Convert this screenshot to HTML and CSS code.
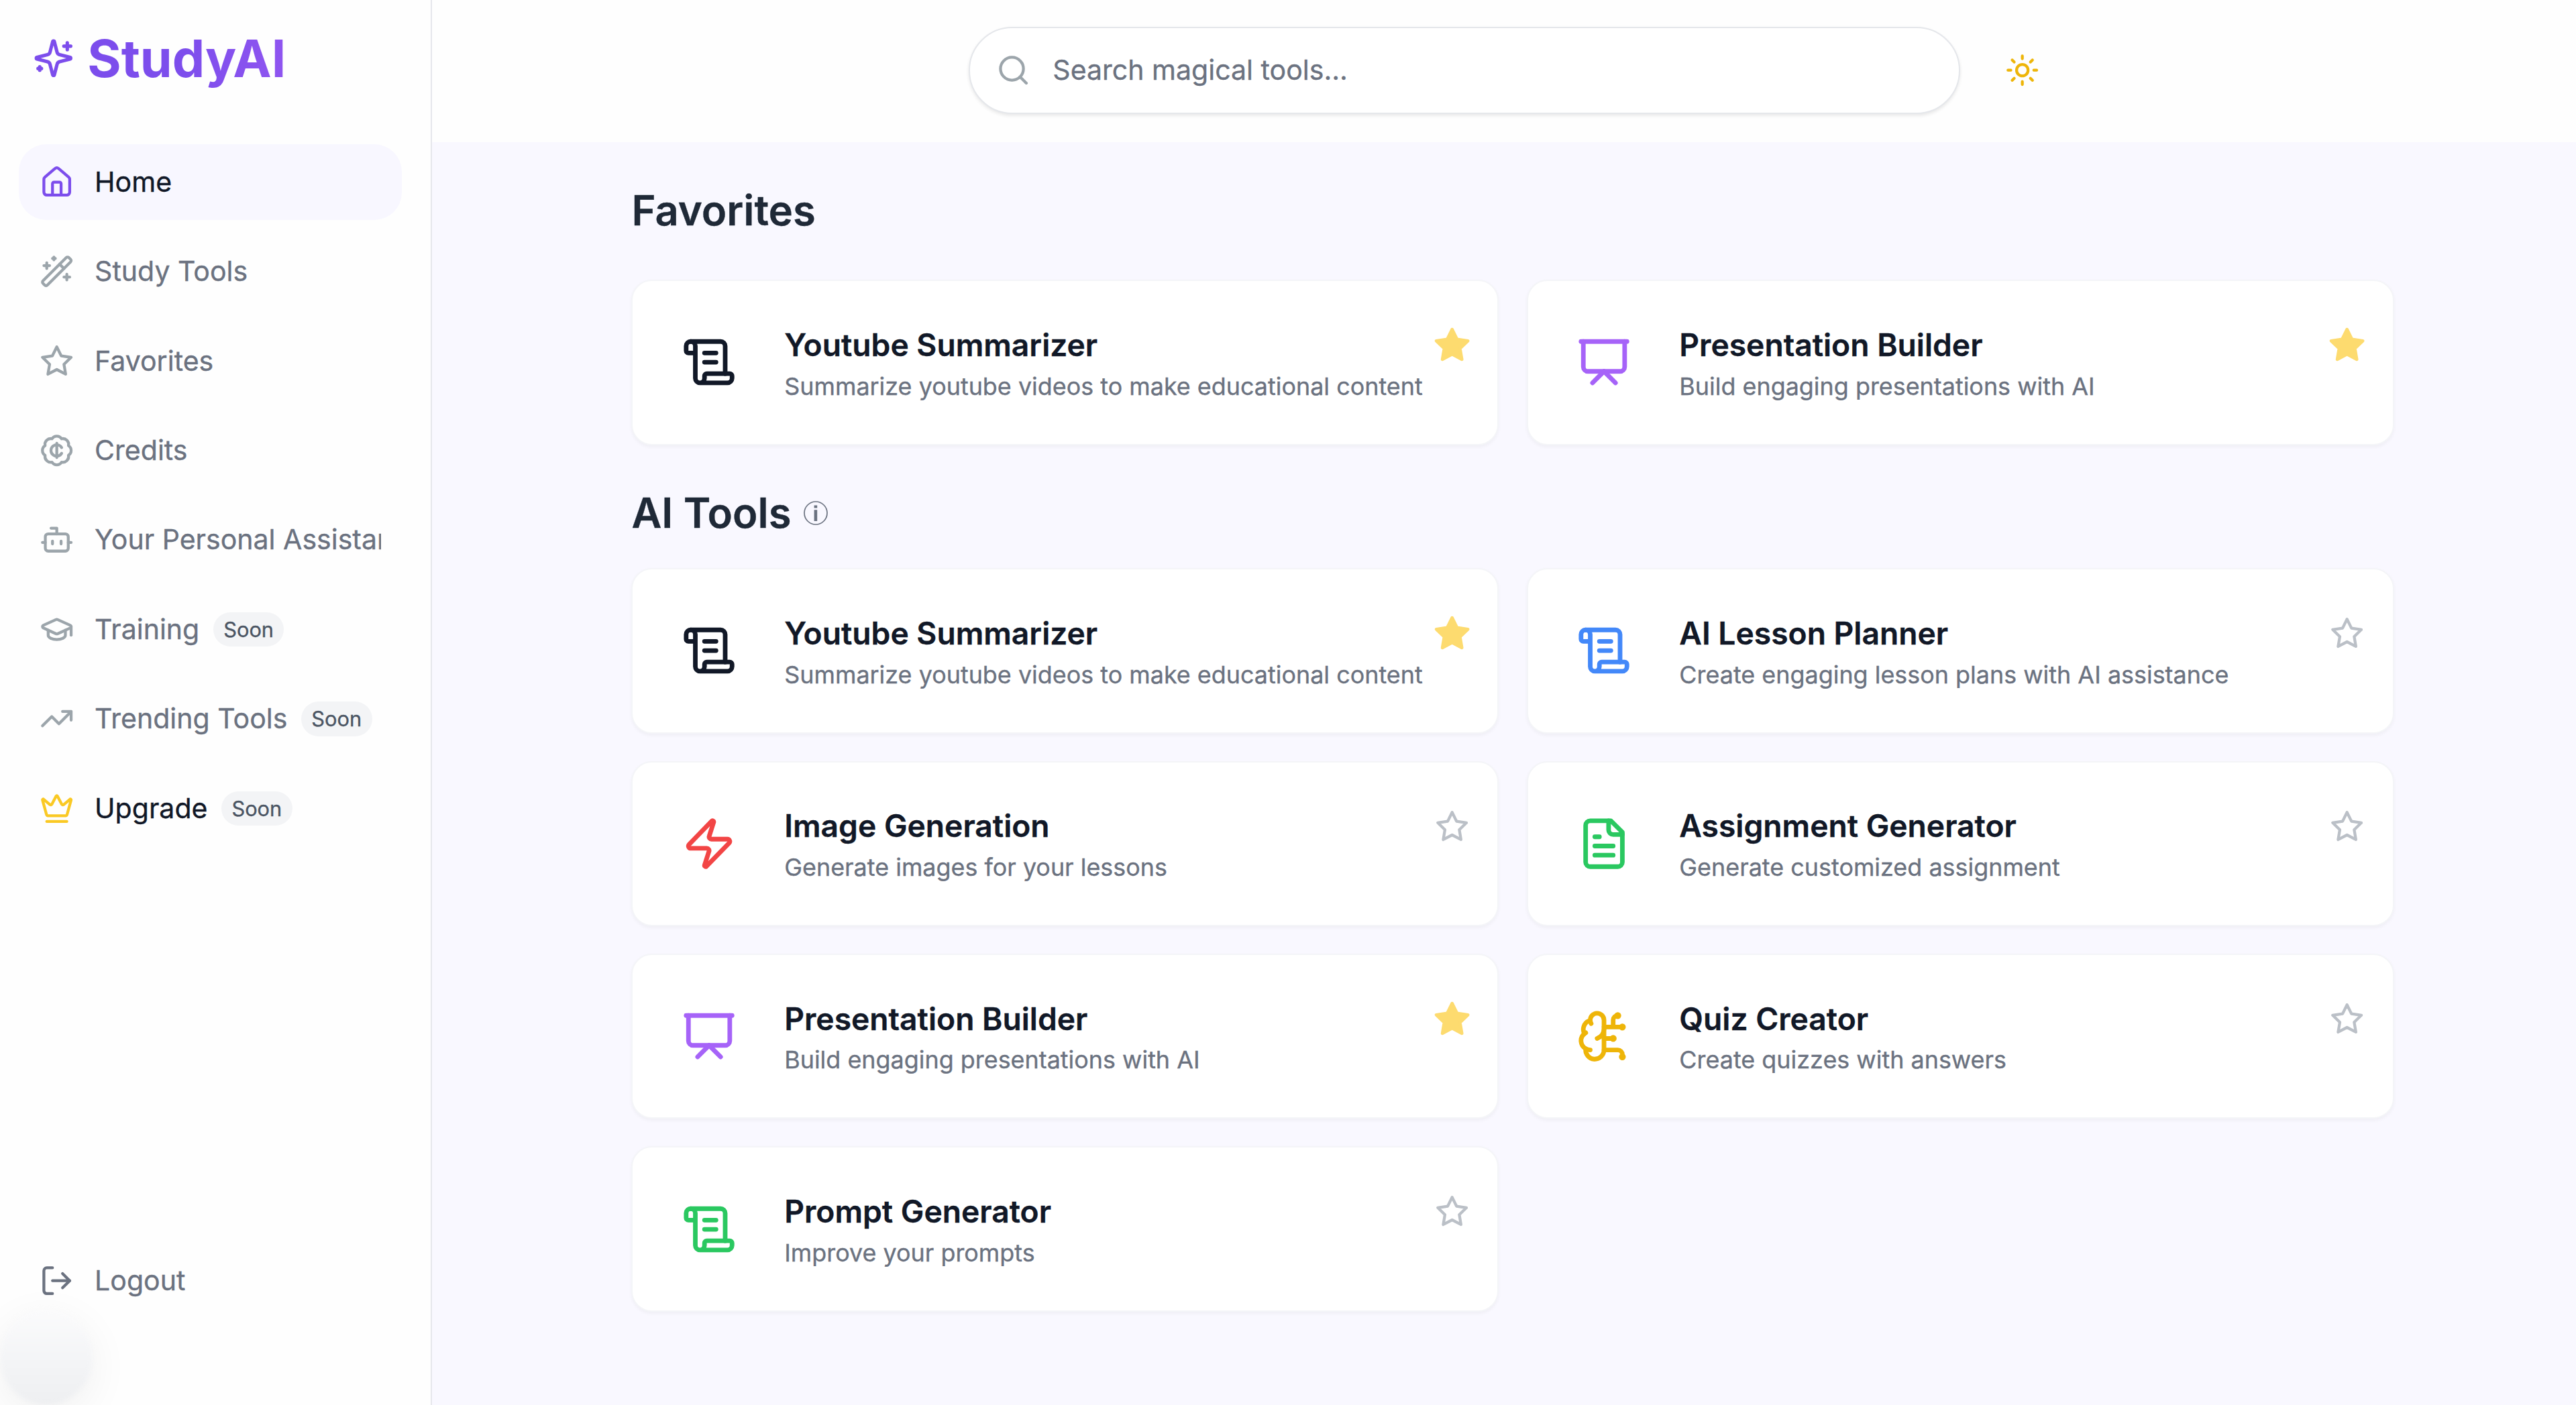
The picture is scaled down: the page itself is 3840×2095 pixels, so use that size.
FILE: index.html
```html
<!DOCTYPE html>
<html lang="en">
<head>
<meta charset="utf-8">
<title>StudyAI</title>
<link rel="stylesheet" href="styles.css">
</head>
<body>
<svg class="sprite" aria-hidden="true">
  <symbol id="sparkles" viewBox="0 0 24 24"><path d="M9.937 15.5A2 2 0 0 0 8.5 14.063l-6.135-1.582a.5.5 0 0 1 0-.962L8.5 9.936A2 2 0 0 0 9.937 8.5l1.582-6.135a.5.5 0 0 1 .963 0L14.063 8.5A2 2 0 0 0 15.5 9.937l6.135 1.581a.5.5 0 0 1 0 .964L15.5 14.063a2 2 0 0 0-1.437 1.437l-1.582 6.135a.5.5 0 0 1-.963 0z"/><path d="M20 3v4M22 5h-4M4 17v2M5 18H3"/></symbol>
  <symbol id="house" viewBox="0 0 24 24"><path d="M15 21v-8a1 1 0 0 0-1-1h-4a1 1 0 0 0-1 1v8"/><path d="M3 10a2 2 0 0 1 .709-1.528l7-5.999a2 2 0 0 1 2.582 0l7 5.999A2 2 0 0 1 21 10v9a2 2 0 0 1-2 2H5a2 2 0 0 1-2-2z"/></symbol>
  <symbol id="wand" viewBox="0 0 24 24"><path d="m21.64 3.64-1.28-1.28a1.21 1.21 0 0 0-1.72 0L2.36 18.64a1.21 1.21 0 0 0 0 1.72l1.28 1.28a1.2 1.2 0 0 0 1.72 0L21.64 5.36a1.2 1.2 0 0 0 0-1.72"/><path d="m14 7 3 3M5 6v4M19 14v4M10 2v2M7 8H3M21 16h-4M11 3H9"/></symbol>
  <symbol id="star" viewBox="0 0 24 24"><polygon points="12 2 15.09 8.26 22 9.27 17 14.14 18.18 21.02 12 17.77 5.82 21.02 7 14.14 2 9.27 8.91 8.26 12 2"/></symbol>
  <symbol id="cent" viewBox="0 0 24 24"><path d="M3.85 8.62a4 4 0 0 1 4.78-4.77 4 4 0 0 1 6.74 0 4 4 0 0 1 4.78 4.78 4 4 0 0 1 0 6.74 4 4 0 0 1-4.77 4.78 4 4 0 0 1-6.75 0 4 4 0 0 1-4.78-4.77 4 4 0 0 1 0-6.76Z"/><path d="M12 7v10M15.4 10a4 4 0 1 0 0 4"/></symbol>
  <symbol id="bot" viewBox="0 0 24 24"><path d="M12 8V4H8"/><rect width="16" height="12" x="4" y="8" rx="2"/><path d="M2 14h2M20 14h2M15 13v2M9 13v2"/></symbol>
  <symbol id="cap" viewBox="0 0 24 24"><path d="M21.42 10.922a1 1 0 0 0-.019-1.838L12.83 5.18a2 2 0 0 0-1.66 0L2.6 9.08a1 1 0 0 0 0 1.832l8.57 3.908a2 2 0 0 0 1.66 0z"/><path d="M22 10v6"/><path d="M6 12.5V16a6 3 0 0 0 12 0v-3.5"/></symbol>
  <symbol id="trend" viewBox="0 0 24 24"><polyline points="22 7 13.5 15.5 8.5 10.5 2 17"/><polyline points="16 7 22 7 22 13"/></symbol>
  <symbol id="crown" viewBox="0 0 24 24"><path d="M11.562 3.266a.5.5 0 0 1 .876 0L15.39 8.87a1 1 0 0 0 1.516.294L21.183 5.5a.5.5 0 0 1 .798.519l-2.834 10.246a1 1 0 0 1-.956.734H5.81a1 1 0 0 1-.957-.734L2.02 6.02a.5.5 0 0 1 .798-.519l4.276 3.664a1 1 0 0 0 1.516-.294z"/><path d="M5 21h14"/></symbol>
  <symbol id="logout" viewBox="0 0 24 24"><path d="M9 21H5a2 2 0 0 1-2-2V5a2 2 0 0 1 2-2h4"/><polyline points="16 17 21 12 16 7"/><path d="M21 12H9"/></symbol>
  <symbol id="search" viewBox="0 0 24 24"><circle cx="11" cy="11" r="8"/><path d="m21 21-4.3-4.3"/></symbol>
  <symbol id="sun" viewBox="0 0 24 24"><circle cx="12" cy="12" r="4"/><path d="M12 2v2M12 20v2M4.93 4.93l1.41 1.41M17.66 17.66l1.41 1.41M2 12h2M20 12h2M6.34 17.66l-1.41 1.41M19.07 4.93l-1.41 1.41"/></symbol>
  <symbol id="scroll" viewBox="0 0 24 24"><path d="M15 12h-5M15 8h-5"/><path d="M19 17V5a2 2 0 0 0-2-2H4"/><path d="M8 21h12a2 2 0 0 0 2-2v-1a1 1 0 0 0-1-1H11a1 1 0 0 0-1 1v1a2 2 0 1 1-4 0V5a2 2 0 1 0-4 0v2a1 1 0 0 0 1 1h3"/></symbol>
  <symbol id="board" viewBox="0 0 24 24"><path d="M2 3h20"/><path d="M21 3v11a2 2 0 0 1-2 2H5a2 2 0 0 1-2-2V3"/><path d="m7 21 5-5 5 5"/></symbol>
  <symbol id="zap" viewBox="0 0 24 24"><path d="M4 14a1 1 0 0 1-.78-1.63l9.9-10.2a.5.5 0 0 1 .86.46l-1.92 6.02A1 1 0 0 0 13 10h7a1 1 0 0 1 .78 1.63l-9.9 10.2a.5.5 0 0 1-.86-.46l1.92-6.02A1 1 0 0 0 11 14z"/></symbol>
  <symbol id="file" viewBox="0 0 24 24"><path d="M15 2H6a2 2 0 0 0-2 2v16a2 2 0 0 0 2 2h12a2 2 0 0 0 2-2V7Z"/><path d="M14 2v4a2 2 0 0 0 2 2h4"/><path d="M10 9H8M16 13H8M16 17H8"/></symbol>
  <symbol id="brain" viewBox="0 0 24 24"><path d="M12 5a3 3 0 1 0-5.997.125 4 4 0 0 0-2.526 5.77 4 4 0 0 0 .556 6.588A4 4 0 1 0 12 18Z"/><path d="M9 13a4.5 4.5 0 0 0 3-4"/><path d="M6.003 5.125A3 3 0 0 0 6.401 6.5"/><path d="M3.477 10.896a4 4 0 0 1 .585-.396"/><path d="M6 18a4 4 0 0 1-1.967-.516"/><path d="M12 13h4M12 18h6a2 2 0 0 1 2 2v1M12 8h8M16 8V5a2 2 0 0 1 2-2"/><circle cx="16" cy="13" r=".5"/><circle cx="18" cy="3" r=".5"/><circle cx="20" cy="21" r=".5"/><circle cx="20" cy="8" r=".5"/></symbol>
</svg>

<div class="app">
  <aside class="sidebar">
    <div class="logo"><svg class="icon icon-md"><use href="#sparkles"/></svg><span class="logo-text">StudyAI</span></div>
    <nav class="nav">
      <a class="nav-item active"><svg class="icon"><use href="#house"/></svg><span class="nav-label">Home</span></a>
      <a class="nav-item"><svg class="icon"><use href="#wand"/></svg><span class="nav-label">Study Tools</span></a>
      <a class="nav-item"><svg class="icon"><use href="#star"/></svg><span class="nav-label">Favorites</span></a>
      <a class="nav-item"><svg class="icon"><use href="#cent"/></svg><span class="nav-label">Credits</span></a>
      <a class="nav-item"><svg class="icon"><use href="#bot"/></svg><span class="nav-label">Your Personal Assistant</span></a>
      <a class="nav-item"><svg class="icon"><use href="#cap"/></svg><span class="nav-label">Training<span class="badge">Soon</span></span></a>
      <a class="nav-item"><svg class="icon"><use href="#trend"/></svg><span class="nav-label">Trending Tools<span class="badge">Soon</span></span></a>
      <a class="nav-item upgrade"><svg class="icon"><use href="#crown"/></svg><span class="nav-label">Upgrade<span class="badge">Soon</span></span></a>
    </nav>
    <a class="nav-item logout"><svg class="icon"><use href="#logout"/></svg><span class="nav-label">Logout</span></a>
    <div class="orb"></div>
  </aside>

  <div class="main">
    <header class="header">
      <div class="search"><svg class="icon"><use href="#search"/></svg><span>Search magical tools...</span></div>
      <svg class="icon sun"><use href="#sun"/></svg>
    </header>

    <main class="content">
      <h2 class="heading">Favorites</h2>
      <section class="grid favorites">
        <article class="card">
          <svg class="icon card-icon ink"><use href="#scroll"/></svg>
          <div class="card-body"><div class="card-top"><h3>Youtube Summarizer</h3><svg class="icon fav on"><use href="#star"/></svg></div><p>Summarize youtube videos to make educational content</p></div>
        </article>
        <article class="card">
          <svg class="icon card-icon purple"><use href="#board"/></svg>
          <div class="card-body"><div class="card-top"><h3>Presentation Builder</h3><svg class="icon fav on"><use href="#star"/></svg></div><p>Build engaging presentations with AI</p></div>
        </article>
      </section>

      <h2 class="heading">AI Tools<svg class="info" viewBox="0 0 36 36"><circle cx="18" cy="18" r="17" fill="none" stroke="currentColor" stroke-width="1.7"/><path d="M15.6 6.6h4.6v3.9h-4.6zM15.6 13.2h4.6v16.8h-4.6z" fill="currentColor"/></svg></h2>
      <section class="grid">
        <article class="card">
          <svg class="icon card-icon ink"><use href="#scroll"/></svg>
          <div class="card-body"><div class="card-top"><h3>Youtube Summarizer</h3><svg class="icon fav on"><use href="#star"/></svg></div><p>Summarize youtube videos to make educational content</p></div>
        </article>
        <article class="card">
          <svg class="icon card-icon blue"><use href="#scroll"/></svg>
          <div class="card-body"><div class="card-top"><h3>AI Lesson Planner</h3><svg class="icon fav"><use href="#star"/></svg></div><p>Create engaging lesson plans with AI assistance</p></div>
        </article>
        <article class="card">
          <svg class="icon card-icon red"><use href="#zap"/></svg>
          <div class="card-body"><div class="card-top"><h3>Image Generation</h3><svg class="icon fav"><use href="#star"/></svg></div><p>Generate images for your lessons</p></div>
        </article>
        <article class="card">
          <svg class="icon card-icon green"><use href="#file"/></svg>
          <div class="card-body"><div class="card-top"><h3>Assignment Generator</h3><svg class="icon fav"><use href="#star"/></svg></div><p>Generate customized assignment</p></div>
        </article>
        <article class="card">
          <svg class="icon card-icon purple"><use href="#board"/></svg>
          <div class="card-body"><div class="card-top"><h3>Presentation Builder</h3><svg class="icon fav on"><use href="#star"/></svg></div><p>Build engaging presentations with AI</p></div>
        </article>
        <article class="card">
          <svg class="icon card-icon yellow"><use href="#brain"/></svg>
          <div class="card-body"><div class="card-top"><h3>Quiz Creator</h3><svg class="icon fav"><use href="#star"/></svg></div><p>Create quizzes with answers</p></div>
        </article>
        <article class="card">
          <svg class="icon card-icon green"><use href="#scroll"/></svg>
          <div class="card-body"><div class="card-top"><h3>Prompt Generator</h3><svg class="icon fav"><use href="#star"/></svg></div><p>Improve your prompts</p></div>
        </article>
      </section>
    </main>
  </div>
</div>
</body>
</html>
```
FILE: styles.css
```css
html {
  font-size: 41.06px;
}

* {
  box-sizing: border-box;
}

body {
  margin: 0;
  font-family: Inter, "Liberation Sans", sans-serif;
  font-size: 1rem;
  font-weight: 420;
  line-height: 1.5;
  color: #111827;
  background: #fff;
  -webkit-text-stroke: 0.35px;
}

h2, h3, p {
  margin: 0;
}

.sprite {
  display: none;
}

.icon {
  display: block;
  flex: none;
  width: 1.25rem;
  height: 1.25rem;
  fill: none;
  stroke: currentColor;
  stroke-width: 2;
  stroke-linecap: round;
  stroke-linejoin: round;
}

.icon-md {
  width: 1.5rem;
  height: 1.5rem;
}

.app {
  display: flex;
  height: 2095px;
  overflow: hidden;
}

/* Sidebar */
.sidebar {
  position: relative;
  display: flex;
  flex-direction: column;
  flex: none;
  width: 644px;
  padding: 0 43px 129px 28.2px;
  background: #fefefe;
  border-right: 2.5px solid #e6e7ec;
}

.logo {
  display: flex;
  align-items: center;
  gap: 0.47rem;
  height: 174px;
  margin-bottom: 41px;
  padding-left: 21.2px;
  color: #7c4dec;
}

.logo-text {
  font-size: 1.875rem;
  font-weight: 700;
  line-height: 1.2;
  color: transparent;
  background: linear-gradient(90deg, #7c4dec 45%, #8f55f0);
  -webkit-background-clip: text;
  background-clip: text;
  -webkit-text-stroke: 0;
}

.nav {
  display: flex;
  flex-direction: column;
  gap: 0.5rem;
}

.nav-item {
  display: flex;
  align-items: center;
  gap: 0.75rem;
  height: 2.75rem;
  padding: 0 0.75rem;
  border-radius: 1rem;
  color: #6b7280;
}

.nav-item .icon {
  color: #9ca5ab;
}

.nav-label {
  display: flex;
  align-items: center;
  min-width: 0;
  overflow: hidden;
  white-space: nowrap;
}

.nav-item.active {
  color: #111827;
  background: #f8f7ff;
}

.nav-item.active .icon {
  color: #7c4dec;
}

.nav-item.upgrade {
  color: #111827;
}

.nav-item.upgrade .icon {
  color: #fac924;
}

.nav-item.logout {
  margin-top: auto;
}

.nav-item.logout .icon {
  color: #6b7280;
}

.badge {
  margin-left: 0.5rem;
  padding: 0 0.375rem;
  border-radius: 1rem;
  font-size: 0.75rem;
  line-height: 1.25rem;
  color: #4b5563;
  background: #f3f4f6;
}

/* Floating translucent button in the window corner */
.orb {
  position: absolute;
  left: 0;
  bottom: 0;
  width: 138px;
  height: 142px;
  border-radius: 50%;
  background: linear-gradient(#fbfbfc 0%, #f4f5f7 50%, #eeeff1);
  box-shadow: 0 14px 64px rgba(0, 0, 0, 0.06);
  filter: blur(3px);
}

/* Main column */
.main {
  display: flex;
  flex-direction: column;
  flex: 1;
  background: #f9f8ff;
}

.header {
  display: flex;
  align-items: center;
  gap: 67px;
  height: 211.5px;
  padding: 0 0 1.5px 799.5px;
  background: #fefefe;
}

.search {
  display: flex;
  align-items: center;
  gap: 33.5px;
  width: 36rem;
  height: 3.15rem;
  padding-left: 39px;
  border: 2.6px solid #e5e7eb;
  border-radius: 2rem;
  color: #6b7280;
  background: #fff;
  box-shadow: 0 2.6px 5px rgba(0, 0, 0, 0.09);
}

.search .icon {
  color: #9ca5ab;
}

.sun {
  color: #eeb509;
}

.content {
  width: 2627.2px;
  margin-left: 297.4px;
  padding-top: 61.5px;
}

.heading {
  display: flex;
  align-items: center;
  gap: 18.5px;
  font-size: 1.5rem;
  font-weight: 640;
  line-height: 2rem;
  color: #1f2937;
}

.info {
  width: 36px;
  height: 36px;
  color: #6b7280;
}

.grid {
  display: grid;
  grid-template-columns: 1fr 1fr;
  gap: 1rem;
  margin-top: 1rem;
}

.favorites {
  margin: 62.2px 0 60.4px;
}

.card {
  display: flex;
  align-items: center;
  gap: 1.73rem;
  height: 6rem;
  padding: 0 1.03rem 0 1.77rem;
  border: 2.5px solid #f4f5f8;
  border-radius: 0.75rem;
  background: #fff;
  box-shadow: 0 2.6px 5px rgba(0, 0, 0, 0.04);
}

.card-icon {
  width: 2rem;
  height: 2rem;
}

.card-body {
  flex: 1;
  min-width: 0;
}

.card-top {
  display: flex;
  align-items: center;
  justify-content: space-between;
  height: 1.75rem;
}

.card h3 {
  font-size: 1.125rem;
  font-weight: 630;
  line-height: 1.75rem;
}

.card p {
  font-size: 0.875rem;
  font-weight: 400;
  line-height: 1.25rem;
  color: #6b7280;
}

.fav {
  color: #bbc0c7;
}

.fav.on {
  color: #fddb6f;
  fill: currentColor;
  transform: scale(1.1);
}

.ink { color: #111827; }
.purple { color: #a663f8; }
.blue { color: #4388f9; }
.red { color: #f24545; }
.green { color: #2ac860; }
.yellow { color: #eeb509; }
```
